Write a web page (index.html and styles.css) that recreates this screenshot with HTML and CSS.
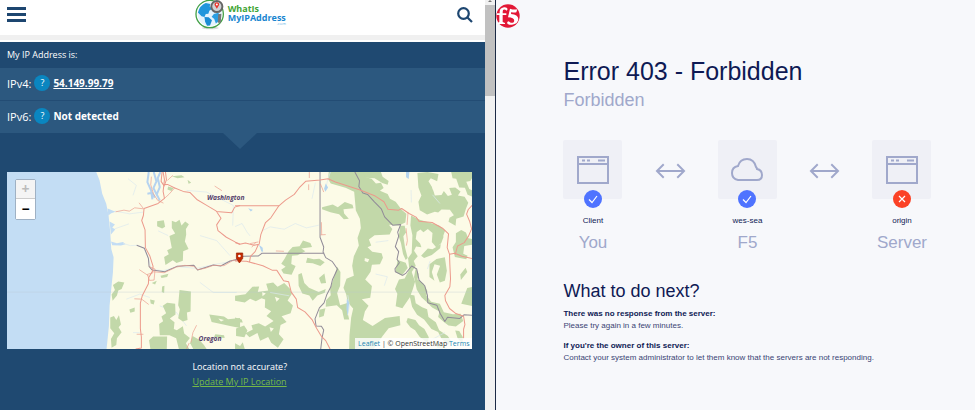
FILE: index.html
```
<!DOCTYPE html>
<html lang="en">
<head>
    <meta charset="UTF-8">
    <meta name="viewport" content="width=device-width, initial-scale=1.0">
    <title>What Is My IP Address / Error 403</title>
    <link rel="stylesheet" href="styles.css">
</head>
<body>
    <div class="screen">
        <section class="ip-pane">
            <div class="ip-page">
                <header class="site-header">
                    <button class="menu-btn" type="button" aria-label="Menu">
                        <span></span><span></span><span></span>
                    </button>
                    <a class="logo" href="#">
                        <svg class="logo-globe" viewBox="0 0 90 92" aria-hidden="true">
                            <ellipse cx="46" cy="86" rx="26" ry="4" fill="#ddd"/>
                            <circle cx="44" cy="43" r="42" fill="#fff" stroke="#43a047" stroke-width="4"/>
                            <circle cx="44" cy="43" r="37" fill="#e4f3fd"/>
                            <path d="M8 38 Q14 16 32 9 L46 12 L44 20 L52 27 L43 33 L40 42 L32 43 L28 52 L19 50Z" fill="#2196dc"/>
                            <path d="M28 52 L41 53 L51 62 L45 78 L36 79 L30 67Z" fill="#1b8cd4"/>
                            <path d="M57 43 L70 39 L78 50 L73 64 L63 72 L58 58 L50 51Z" fill="#2b9ee2"/>
                            <path d="M70 44 L80 42 L78 70 L69 70Z" fill="#777"/>
                            <circle cx="66" cy="20" r="17" fill="#cfd3d6" stroke="#666" stroke-width="6"/>
                            <path d="M66 27 L59 15 Q58 7 66 7 Q74 7 73 15Z" fill="#e5342b"/>
                            <circle cx="66" cy="14" r="3" fill="#fff"/>
                        </svg>
                        <span class="logo-text">
                            <span class="logo-green">WhatIs</span>
                            <span class="logo-blue">MyIPAddress</span>
                            <span class="logo-com">.com</span>
                        </span>
                    </a>
                    <button class="search-btn" type="button" aria-label="Search">
                        <svg viewBox="0 0 16 16" aria-hidden="true">
                            <circle cx="6.5" cy="6.5" r="5.3"/>
                            <path d="M10.5 10.5 L15 15"/>
                        </svg>
                    </button>
                </header>

                <main class="ip-main">
                    <p class="ip-title">My IP Address is:</p>
                    <div class="ip-row">
                        <span>IPv4:</span>
                        <button class="help" type="button">?</button>
                        <a class="ip-value" href="#">54.149.99.79</a>
                    </div>
                    <div class="ip-row last">
                        <span>IPv6:</span>
                        <button class="help" type="button">?</button>
                        <span class="ip-value">Not detected</span>
                    </div>

                    <div class="map">
                        <svg class="map-tiles" viewBox="22 20 1394 529" preserveAspectRatio="xMidYMid slice">
                            <rect x="22" y="20" width="1394" height="529" fill="#fcfbe7"/>
                            <!-- ocean -->
                            <path fill="#c3ddf4" d="M22 20 H290 L300 45 L308 85 L320 115 L327 150 L332 200 L335 250 L342 275 L340 320 L335 370 L330 420 L328 480 L321 549 H22Z"/>
                            <path fill="#c3ddf4" d="M324 129 L348 139 L335 143 L326 150Z M330 168 L346 177 L338 186 L347 192 L334 207Z M334 228 L352 233 L370 229 L378 236 L364 240 L338 239Z"/>
                            <path class="inlet" d="M447 20 L443 50 L454 75 L458 102 M462 20 L470 48 L461 68 L473 92 M482 20 L474 38 L480 65 L471 87 L480 105 M443 85 L457 82 L465 97"/>
                            <path class="river" d="M370 233 L392 240 L414 239 L433 248 L446 278 L455 311 L490 315 L535 303 L590 308 L640 297 L690 288 L720 282 M385 40 L410 60 L400 90 M346 137 L390 145 L430 140 M345 190 L388 175 M475 196 L505 210 M600 210 L650 225 L690 270 M560 75 L620 80 L700 120 L698 180 M380 400 L420 385 L450 395 M480 420 L530 440 L560 480 M400 500 L420 500 M600 350 L640 380 L710 380"/>

                            <!-- forests, west -->
                            <g class="forest">
                                <path d="M472 167 L492 164 L496 184 L487 189 L472 182Z"/>
                                <path d="M516 166 L528 170 L539 163 L545 180 L556 168 L567 176 L558 190 L559 207 L555 228 L566 250 L550 257 L549 285 L530 292 L519 284 L497 298 L493 274 L507 266 L502 254 L516 247 L509 211 L526 204 L516 187Z"/>
                                <path d="M340 358 L356 347 L374 350 L366 370 L356 374 L352 389 L339 405 L336 386 L346 373Z"/>
                                <path d="M332 455 L343 450 L350 462 L358 448 L364 476 L357 484 L366 499 L352 517 L350 537 L336 545 L334 519 L344 502 L332 487Z"/>
                                <path d="M389 431 L405 425 L405 437 L392 441Z M451 401 L465 404 L462 416 L453 413Z M456 352 L471 345 L466 356Z M482 330 L506 324 L502 334 L485 337Z M487 362 L494 360 L493 382 L486 379Z"/>
                                <path d="M539 373 L573 377 L572 437 L561 440 L563 462 L549 467 L535 457 L540 430 L535 418Z"/>
                                <path d="M489 420 L502 411 L526 414 L527 446 L510 458 L524 469 L522 489 L531 493 L549 481 L553 503 L570 516 L558 532 L568 549 H537 L529 517 L509 508 L480 508 L478 474 L490 466 L485 452 L499 442Z"/>
                                <path d="M448 523 L460 512 L502 512 L501 549 H452Z"/>
                                <path d="M578 510 L598 521 L612 537 L620 549 H580 L571 532Z"/>
                                <path d="M628 446 L672 452 L684 460 L720 456 V486 L690 480 L670 476 L635 468Z"/>
                                <path d="M646 505 L672 508 L674 516 L642 514Z M505 63 L521 68 L515 77 L503 72Z M516 33 L545 30 L554 36 L533 39Z M563 43 L574 52 L566 55Z"/>
                            </g>

                            <!-- forests, east -->
                            <g class="forest" transform="translate(705 0)">
                                <path d="M280 20 H385 L391 36 L408 40 L421 54 L436 52 L444 68 L433 76 L456 86 L463 100 L480 109 L498 133 L512 145 L509 171 L489 180 L460 178 L470 190 L462 207 L417 209 L400 222 L407 240 L396 245 L410 258 L438 263 L442 276 L433 296 L409 297 L405 318 L389 341 L409 361 L404 396 L379 400 L399 420 L388 437 L382 462 L411 480 L448 456 L492 450 L494 478 L459 487 L441 510 L414 549 H341 L342 508 L347 455 L353 428 L337 410 L332 385 L324 366 L333 339 L355 330 L350 300 L355 272 L370 240 L366 217 L376 187 L373 160 L361 135 L356 79 L330 67 L286 54 L278 42Z"/>
                                <path d="M260 125 L292 117 L307 125 L328 110 L351 118 L354 128 L324 131 L326 144 L340 160 L325 161 L311 146 L285 140 L260 131Z"/>
                                <path d="M138 294 L148 279 L160 257 L172 244 L193 242 L203 225 L225 232 L230 244 L198 249 L210 257 L187 269 L170 270 L168 295 L181 301 L169 327 L145 323 L138 312 L151 303Z"/>
                                <path d="M212 291 L216 276 L235 281 L252 279 L268 290 L255 301 L232 293Z M199 322 L207 352 L221 366 L250 379 L271 370 L268 381 L246 389 L232 405 L222 389 L201 383 L190 360 L189 326Z M251 337 L267 323 L272 352 L257 353Z"/>
                                <path d="M0 390 L31 385 L52 363 L72 362 L68 379 L99 374 L93 354 L114 350 L127 363 L147 352 L164 369 L170 384 L157 404 L173 419 L166 442 L139 451 L154 468 L136 477 L131 505 L145 520 L128 545 L108 530 L99 513 L75 524 L67 501 L43 514 L31 502 L53 491 L49 478 L71 472 L90 482 L115 465 L94 450 L108 436 L89 425 L90 401 L79 397 L62 406 L45 399 L29 410 L0 405Z"/>
                                <path d="M0 455 L20 461 L23 470 L0 469Z M3 488 L27 479 L37 494 L28 514 L3 510Z M0 532 L15 540 L23 529 L29 549 H0Z"/>
                                <path d="M305 303 L315 319 L314 360 L305 382 L314 418 L338 411 L335 434 L341 461 L326 461 L320 433 L304 418 L271 423 L272 403 L286 388 L284 370 L295 337Z M252 432 L270 427 L265 450 L251 455 Z"/>
                                <path d="M494 181 L507 181 L511 201 L503 212 L508 246 L516 277 L510 283 L502 265 L496 233 L489 212Z M486 283 L510 291 L516 307 L498 330 L479 318Z"/>
                                <path d="M526 150 L552 163 L577 170 L610 180 L628 195 L622 211 L591 203 L576 190 L563 200 L554 192 L543 199 L540 220 L553 234 L557 245 L541 243 L535 255 L546 272 L534 286 L540 300 L528 319 L538 348 L531 371 L522 395 L500 427 L480 421 L485 384 L478 370 L490 341 L507 338 L521 311 L517 278 L528 262 L530 209 L524 180Z"/>
                                <path d="M590 203 L616 191 L623 214 L616 233 L601 245 L588 229Z M556 270 L576 249 L590 251 L615 235 L613 248 L588 268 L565 277Z M581 296 L602 280 L627 275 L633 315 L627 345 L612 350 L603 326 L613 300 L596 296 L588 319 L596 345 L581 334Z"/>
                                <path d="M540 307 L549 325 L545 341 L563 353 L575 376 L572 389 L586 408 L612 414 L624 439 L651 445 L674 444 L682 465 L660 482 L638 479 L625 469 L607 453 L611 437 L589 425 L575 411 L557 394 L543 371 L535 334Z"/>
                                <path d="M521 386 L536 389 L540 412 L559 424 L574 430 L578 453 L600 469 L610 493 L636 510 L646 526 L637 536 L617 518 L607 498 L587 489 L565 461 L544 447 L529 423Z"/>
                                <path d="M516 456 L539 462 L550 478 L566 489 L579 514 L576 531 L552 513 L538 493 L524 484 L512 468Z M598 525 L617 535 L632 547 L604 545Z M658 494 L670 495 L681 514 L680 533 L665 517Z"/>
                                <path d="M660 203 L676 193 L690 201 L697 218 L711 221 V237 L685 241 L682 264 L695 270 L691 281 L657 274 L650 245 L660 229Z M694 367 L711 363 V421 L676 414Z M673 326 L689 306 L694 319 L675 343Z"/>
                                <path d="M545 23 L575 20 L608 26 L604 48 L585 39 L578 48 L590 67 L597 90 L617 89 L624 77 L636 92 L648 88 L640 68 L658 66 L674 78 L666 90 L686 94 L697 112 L690 130 L683 153 L661 160 L659 181 L638 169 L641 157 L654 149 L642 133 L617 132 L607 141 L597 139 L574 147 L552 134 L548 109 L557 90 L548 66Z"/>
                                <path d="M646 20 H711 V34 L703 47 L691 49 L700 71 L711 76 V94 L695 88 L687 67 L670 66 L661 40 L650 39Z M383 20 H436 L441 34 L459 47 L456 58 L440 53 L417 39 L388 37Z"/>
                            </g>
                            <!-- clearings -->
                            <path fill="#fcfbe7" d="M1093 277 L1106 281 L1102 290 L1092 286Z M1187 71 L1209 80 L1212 99 L1195 97Z M655 458 L672 462 L663 467Z M786 379 L797 383 L787 391Z M824 393 L838 398 L829 408Z M808 484 L821 488 L812 498Z M881 286 L892 280 L886 294Z M1291 55 L1303 64 L1297 76Z"/>
                            <g transform="translate(705 0)">
                                <path class="river" d="M0 183 L21 174 L36 200 L45 211 M70 238 L83 249 L78 261 M82 195 L105 184 L147 191 L180 174 L213 187 L250 179 M285 20 L276 47 L270 74 M40 129 L51 135 M240 52 L230 100 M337 388 L342 420 L336 448 M420 230 L458 225 M526 74 L527 111 M590 88 L612 114 M420 325 L455 333 L446 360 M105 380 L162 390 M590 520 L627 500 M514 20 L518 39 M575 310 L583 286"/>
                                <path class="lake" d="M511 20 H521 L519 41 L511 36Z M334 398 L341 410 L337 450 L333 430Z M271 54 L278 66 L270 79 L266 70Z M72 238 L82 246 L84 259 L78 256Z M40 129 L53 133 L47 138Z"/>
                            </g>

                            <path class="grid-line" d="M22 379 H1416"/>

                            <!-- state borders -->
                            <path class="border" d="M411 239 L434 248 L446 278 L448 302 L457 313 L495 318 L531 302 L582 299 L593 313 L640 298 L662 301 L690 286 L720 279"/>
                            <g transform="translate(705 0)">
                                <path class="border" d="M0 284 L25 272 L70 271 L80 263 L267 263 M254 20 V215 L265 244 L263 259 L271 276 L291 288 L306 310 L291 342 L286 364 L274 387 L266 411 L252 426 L239 459 L242 480 L258 481 L265 492 L260 516 L256 549"/>
                                <path class="border" d="M358 20 L372 46 L370 63 L382 83 L396 87 L415 108 L437 130 L447 154 L471 179 L495 177 L486 200 L489 212 L479 243 L489 258 L484 281 L491 291 L478 309 L479 318 L501 329 L511 322 L528 301 L543 310 L550 343 L567 360 L575 389 L576 411 L603 418 L613 443 L627 467 L635 454 L671 458 L684 447 L711 448"/>
                            </g>

                            <!-- highways -->
                            <path class="road" d="M490 20 L494 43 L490 78 L494 99 L475 114 L433 129 L431 150 L426 165 L436 193 L437 246 L450 270 L460 302 L458 317 L447 335 L446 354 L428 389 L422 412 V488 L425 513 L425 546 L408 549"/>
                            <path class="road" d="M487 20 L484 48 L493 62 L500 43 L497 20 M490 58 L503 57 L525 68 L550 78 L570 81 L592 103 L619 119 L648 136 L663 158 L650 178 L654 195 L679 215 L705 229 L720 236 M648 138 L695 142 L704 125 L720 120"/>
                            <path class="road thin" d="M503 45 L519 30 M494 99 L508 86 L525 67 M455 34 L453 58 L461 85 L474 105 L491 113 M348 139 L373 134 L389 137 L405 127 L431 130 M418 112 L431 129 M419 312 L446 330 M449 303 L466 310 L463 343 L449 344 L443 326 L460 321 M404 399 L426 400 L447 416 M411 505 H431 M573 530 L579 500 L590 478 M568 531 L560 549"/>
                            <path class="road thin" d="M458 318 L493 321 L530 304 L555 299 L582 302 L593 312 L615 308 L640 299 L672 300 L699 284 L720 283"/>
                            <g transform="translate(705 0)">
                                <path class="road" d="M0 121 H131 L151 104 L177 87 L192 67 L211 48 L254 44 L278 40 L300 50 L337 62 L374 74 L419 92 L445 109 L457 131 L489 134 L498 129 L520 144 L541 155 L550 167 L589 171 L620 188 L638 205 L634 246 L641 266 L657 263 L678 272 L711 279"/>
                                <path class="road" d="M131 121 L107 157 L91 171 L77 207 L72 236 L57 239 L31 232 L14 236 L0 231 M70 236 L60 258 L46 272 L43 290 M0 286 L34 287 L83 300 L112 314 L125 314 L145 345 L160 348 L168 379 L183 400 L187 425 L209 438 L230 461 L244 488 L258 511 L271 524 L284 549"/>
                                <path class="road" d="M641 265 L642 297 L644 339 L642 363 L627 389 L629 405 L641 428 L660 443 L683 451 L687 476 L683 490 V518 M658 267 L665 241 L685 231 L697 213 L707 190 L701 167 L692 146 L697 132 L711 117"/>
                                <path class="road thin" d="M45 234 L70 229 M50 245 L62 230 M255 55 L265 80 M222 20 V38 M255 208 L271 207 M258 170 L259 208 M122 256 L146 257 M517 141 L514 178 M511 188 L515 225 L512 240 M220 57 V74"/>
                            </g>
                            <path class="road thin" d="M644 62 L666 76"/>

                            <text class="place" x="621" y="104">Washington</text>
                            <text class="place" x="596" y="526">Oregon</text>

                            <path d="M709 262 H728 V278 L718 292 L709 278Z" fill="#c32b00" stroke="#981e00" stroke-width="2"/>
                            <circle cx="718" cy="271" r="4" fill="#fff"/>
                        </svg>
                        <div class="zoom-control">
                            <button type="button" aria-label="Zoom in" disabled>+</button>
                            <button type="button" aria-label="Zoom out">−</button>
                        </div>
                        <div class="attribution"><a href="#">Leaflet</a> | © OpenStreetMap <a href="#">Terms</a></div>
                    </div>

                    <div class="accuracy">
                        <div>
                            <p>Location not accurate?</p>
                            <a href="#">Update My IP Location</a>
                        </div>
                    </div>
                </main>
            </div>
            <div class="scrollbar">
                <svg class="scroll-up" viewBox="0 0 10 5" aria-hidden="true"><path d="M3 2 L5 0 L7 2Z"/></svg>
                <div class="thumb"></div>
            </div>
        </section>

        <section class="error-pane">
            <svg class="f5-logo" viewBox="0 0 72 72" role="img" aria-label="F5">
                <circle cx="36" cy="36" r="35" fill="#e21836"/>
                <path d="M3 28 H11 Q9 12 24 10 Q33 9 35 15 L32 20 Q25 14 21 18 Q20 22 20 28 H31 V33 H20 V54 L27 57 V60 H4 V57 L10 54 V33 H2Z" fill="#fff"/>
                <path d="M42 14 Q53 18 64 16 L61 25 Q53 27 46 24 L45 30 Q66 31 67 45 Q66 60 48 62 Q35 63 33 57 Q35 50 40 53 Q49 60 54 53 Q58 41 36 40Z" fill="#fff"/>
            </svg>
            <div class="error-body">
                <h1>Error 403 - Forbidden</h1>
                <p class="subtitle">Forbidden</p>

                <div class="chain">
                    <div class="node">
                        <div class="tile">
                            <svg class="icon" viewBox="0 0 32 32" aria-hidden="true">
                                <path d="M1 3 H31 V29 H1Z M1 10 H31"/>
                                <path d="M5 6.5 H8 M10 6.5 H13 M21 6.5 H28"/>
                            </svg>
                            <span class="badge ok"><svg viewBox="0 0 18 18"><path d="M5 9.5 L8 12.5 L13 6"/></svg></span>
                        </div>
                        <span class="name">Client</span>
                        <span class="role">You</span>
                    </div>
                    <svg class="arrow" viewBox="0 0 32 18" aria-hidden="true"><path d="M2 9 H30 M9 2 L2 9 L9 16 M23 2 L30 9 L23 16"/></svg>
                    <div class="node">
                        <div class="tile">
                            <svg class="icon" viewBox="0 0 32 32" aria-hidden="true">
                                <path d="M7 26 Q1 25 1 19 Q1 13 7 12 Q9 5 16 5 Q23 5 25 13 Q26 14 26 15 Q31 16 31 21 Q31 26 26 26Z"/>
                            </svg>
                            <span class="badge ok"><svg viewBox="0 0 18 18"><path d="M5 9.5 L8 12.5 L13 6"/></svg></span>
                        </div>
                        <span class="name">wes-sea</span>
                        <span class="role">F5</span>
                    </div>
                    <svg class="arrow" viewBox="0 0 32 18" aria-hidden="true"><path d="M2 9 H30 M9 2 L2 9 L9 16 M23 2 L30 9 L23 16"/></svg>
                    <div class="node">
                        <div class="tile">
                            <svg class="icon" viewBox="0 0 32 32" aria-hidden="true">
                                <path d="M1 3 H31 V29 H1Z M1 10 H31"/>
                                <path d="M5 6.5 H8 M10 6.5 H13 M21 6.5 H28"/>
                            </svg>
                            <span class="badge fail"><svg viewBox="0 0 18 18"><path d="M6 6 L12 12 M12 6 L6 12"/></svg></span>
                        </div>
                        <span class="name">origin</span>
                        <span class="role">Server</span>
                    </div>
                </div>

                <h2>What to do next?</h2>
                <h3>There was no response from the server:</h3>
                <p class="advice">Please try again in a few minutes.</p>
                <h3>If you're the owner of this server:</h3>
                <p class="advice">Contact your system administrator to let them know that the servers are not responding.</p>
            </div>
        </section>
    </div>
</body>
</html>
```
FILE: styles.css
```
:root {
    --navy: #1f4971;
    --navy-light: #2c587f;
    --help: #0a86c0;
    --f5-dark: #0e1a54;
    --f5-muted: #a0a8cb;
    --f5-bg: #f7f8fb;
}

* {
    box-sizing: border-box;
}

body {
    margin: 0;
    font-family: "Open Sans", "Noto Sans", sans-serif;
}

h1, h2, h3, p {
    margin: 0;
    font-weight: normal;
}

button {
    border: none;
    padding: 0;
    font-family: inherit;
    cursor: pointer;
}

.screen {
    display: flex;
    min-height: 100vh;
}

/* Left: IP lookup page */
.ip-pane {
    flex: 496;
    display: flex;
    border-right: 1px solid #1c2a45;
    min-width: 0;
}

.ip-page {
    flex: 1;
    display: flex;
    flex-direction: column;
    min-width: 0;
}

.site-header {
    display: flex;
    align-items: flex-start;
    justify-content: space-between;
    height: 42px;
    padding: 0 12px 0 7px;
    background: linear-gradient(#fff 35px, #f0f0f0 35px, #f0f0f0 40px, #fff 40px);
}

.menu-btn {
    display: flex;
    flex-direction: column;
    gap: 3px;
    width: 19px;
    margin-top: 7px;
    background: none;
}

.menu-btn span {
    height: 3px;
    background-color: #1d4670;
}

.logo {
    display: flex;
    align-items: flex-start;
    gap: 3px;
    text-decoration: none;
}

.logo-globe {
    width: 30px;
    height: 30px;
}

.logo-text {
    display: flex;
    flex-direction: column;
    padding-top: 4px;
    font-size: 9px;
    font-weight: bold;
    line-height: 9px;
}

.logo-green {
    color: #3fa535;
}

.logo-blue {
    color: #1a86d0;
}

.logo-com {
    align-self: flex-end;
    color: #6bb6e6;
    font-size: 4px;
    font-weight: normal;
    line-height: 4px;
}

.search-btn {
    width: 19px;
    height: 16px;
    margin-top: 7px;
    background: none;
}

.search-btn svg {
    display: block;
    width: 16px;
    height: 16px;
    margin-left: auto;
    fill: none;
    stroke: #1d4670;
    stroke-width: 2.2;
}

.ip-main {
    flex: 1;
    background-color: var(--navy);
    color: #fff;
}

.ip-title {
    padding: 0 7px;
    font-size: 9px;
    line-height: 26px;
}

.ip-row {
    display: flex;
    align-items: center;
    gap: 3px;
    height: 33px;
    padding: 0 7px 2px;
    border-bottom: 1px solid #234c74;
    background-color: var(--navy-light);
    font-size: 11px;
}

.ip-row.last {
    position: relative;
    height: 32px;
    border-bottom: none;
}

.ip-row.last::after {
    content: "";
    position: absolute;
    top: 100%;
    left: calc(50% - 20px);
    border: 17px solid transparent;
    border-top: 16px solid var(--navy-light);
    border-bottom: none;
}

.help {
    width: 16px;
    height: 16px;
    border-radius: 50%;
    background-color: var(--help);
    color: #fff;
    font-size: 9px;
    line-height: 16px;
}

.ip-value {
    color: #fff;
    font-size: 10px;
    font-weight: bold;
}

.map {
    position: relative;
    height: 177px;
    margin: 39px 13px 0 7px;
    overflow: hidden;
}

.map-tiles {
    display: block;
    width: 100%;
    height: 100%;
}

.forest {
    fill: #c2d8a9;
}

.inlet,
.river,
.border,
.road,
.grid-line {
    fill: none;
    stroke-linejoin: round;
}

.inlet {
    stroke: #b5d3f0;
    stroke-width: 6;
}

.river {
    stroke: #dbe9ee;
    stroke-width: 2;
}

.lake {
    fill: #b5d5ef;
}

.border {
    stroke: #918b98;
    stroke-width: 3;
}

.road {
    stroke: #ec9a8c;
    stroke-width: 3;
}

.road.thin {
    stroke-width: 2;
}

.grid-line {
    stroke: #b8c8d0;
    stroke-width: 1;
}

.place {
    fill: #54416b;
    font-size: 20px;
    font-style: italic;
    font-weight: bold;
}

.zoom-control {
    position: absolute;
    top: 7px;
    left: 8px;
    display: flex;
    flex-direction: column;
    width: 21px;
    border: 1px solid #9fb1c4;
    border-radius: 2px;
}

.zoom-control button {
    height: 20px;
    background-color: #fff;
    color: #000;
    font-size: 14px;
    font-weight: bold;
    line-height: 18px;
}

.zoom-control button:disabled {
    height: 19px;
    border-bottom: 1px solid #ccc;
    background-color: #f4f4f4;
    color: #bbb;
}

.attribution {
    position: absolute;
    right: 0;
    bottom: 0;
    padding: 0 3px;
    background-color: rgba(255, 255, 255, 0.8);
    color: #333;
    font-size: 7px;
    line-height: 11px;
}

.attribution a {
    color: #2087b4;
    text-decoration: none;
}

.accuracy {
    display: flex;
    justify-content: center;
    padding: 10px 13px 0 7px;
    font-size: 9px;
    line-height: 15px;
}

.accuracy a {
    color: #76b947;
}

.scrollbar {
    width: 10px;
    background-color: #f1f1f1;
}

.scroll-up {
    display: block;
    width: 10px;
    height: 5px;
    fill: #777;
}

.thumb {
    height: 91px;
    background-color: #c1c1c1;
}

/* Right: F5 error page */
.error-pane {
    flex: 479;
    min-width: 0;
    padding-top: 4px;
    background-color: var(--f5-bg);
    color: var(--f5-dark);
    font-family: "Liberation Sans", Arial, sans-serif;
}

.f5-logo {
    display: block;
    width: 24px;
    height: 24px;
}

.error-body {
    max-width: 435px;
    padding: 28px 0 0 67px;
}

h1 {
    font-size: 25px;
    line-height: 30px;
}

.subtitle {
    color: var(--f5-muted);
    font-size: 18px;
    line-height: 28px;
}

.chain {
    display: flex;
    justify-content: space-between;
    margin-top: 26px;
}

.node {
    display: flex;
    flex-direction: column;
    align-items: center;
    width: 59px;
}

.tile {
    position: relative;
    display: flex;
    align-items: center;
    justify-content: center;
    width: 59px;
    height: 59px;
    border-radius: 2px;
    background-color: #eff0f6;
}

.icon {
    width: 32px;
    height: 32px;
}

.icon,
.arrow {
    fill: none;
    stroke: var(--f5-muted);
    stroke-width: 2;
}

.arrow {
    width: 31px;
    height: 18px;
    margin-top: 22px;
}

.badge {
    position: absolute;
    bottom: -9px;
    left: calc(50% - 9px);
    width: 18px;
    height: 18px;
    border-radius: 50%;
}

.badge svg {
    display: block;
    fill: none;
    stroke: #fff;
    stroke-width: 1.2;
}

.badge.ok {
    background-color: #4f73ff;
}

.badge.fail {
    background-color: #fb4226;
}

.name {
    margin-top: 16px;
    font-size: 8px;
    line-height: 12px;
}

.role {
    margin-top: 6px;
    color: var(--f5-muted);
    font-size: 17px;
    line-height: 20px;
}

h2 {
    margin: 26px 0 5px;
    font-size: 18px;
    line-height: 24px;
}

h3 {
    font-size: 8px;
    font-weight: bold;
    line-height: 12px;
}

.advice {
    margin-bottom: 8px;
    color: #3a4474;
    font-size: 8px;
    line-height: 12px;
}
```
